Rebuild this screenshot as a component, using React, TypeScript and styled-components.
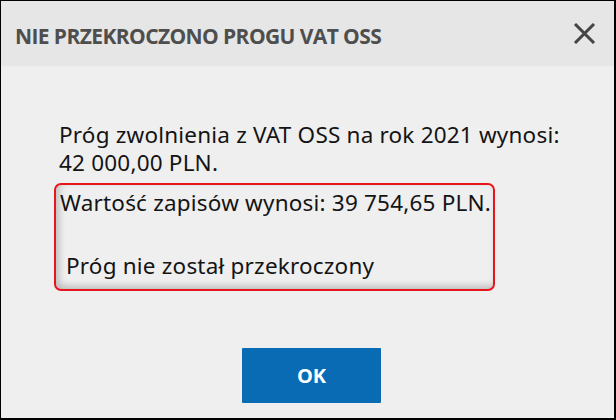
import styled, { createGlobalStyle } from "styled-components"

const GlobalStyle = createGlobalStyle`
  html, body {
    margin: 0;
    padding: 0;
    background: #ffffff;
  }
  * {
    box-sizing: border-box;
  }
`

const Dialog = styled.div`
  width: 616px;
  height: 420px;
  display: flex;
  flex-direction: column;
  background: #efefef;
  border-top: 1px solid #000;
  border-left: 1px solid #000;
  border-right: 2px solid #000;
  border-bottom: 2px solid #000;
  font-family: "Noto Sans", "Open Sans", sans-serif;
`

const Header = styled.header`
  height: 65px;
  flex-shrink: 0;
  display: flex;
  align-items: center;
  justify-content: space-between;
  padding: 4px 18px 0 14px;
  background: #e6e6e6;
`

const Title = styled.h1`
  margin: 0;
  font-family: "Open Sans", sans-serif;
  font-weight: 700;
  font-size: 21px;
  letter-spacing: -0.6px;
  color: #4e4e4e;
`

const CloseButton = styled.button`
  width: 23px;
  height: 21px;
  padding: 0;
  border: none;
  background: none;
  cursor: pointer;
  margin-top: -4px;

  svg {
    display: block;
  }
`

const Body = styled.div`
  display: flex;
  flex-direction: column;
  padding: 55px 0 0 58px;
  color: #141414;
  font-size: 22.5px;
  letter-spacing: 0.2px;
`

const Line = styled.div<{ $indent?: number }>`
  height: 28px;
  line-height: 28px;
  white-space: pre;
  padding-left: ${({ $indent }) => $indent ?? 0}px;
`

const Highlight = styled.div`
  width: 441px;
  height: 108px;
  margin: 6px 0 0 -5px;
  padding: 4px 0 0 4px;
  border: 2px solid #e8141b;
  border-radius: 7px;
  box-shadow: inset 3px -3px 7px rgba(0, 0, 0, 0.22);
  display: flex;
  flex-direction: column;
  gap: 35px;
`

const Footer = styled.div`
  display: flex;
  justify-content: center;
  padding: 57px 0 0 8px;
`

const OkButton = styled.button`
  width: 139px;
  height: 55px;
  border: none;
  border-radius: 1px;
  background: #0a6bb5;
  color: #ffffff;
  font-family: "Open Sans", sans-serif;
  font-weight: 700;
  font-size: 20px;
  cursor: pointer;
`

export default function App() {
  return (
    <>
      <GlobalStyle />
      <Dialog>
        <Header>
          <Title>NIE PRZEKROCZONO PROGU VAT OSS</Title>
          <CloseButton aria-label="Zamknij">
            <svg width="23" height="21" viewBox="0 0 23 21">
              <path d="M2 1 L21 20 M21 1 L2 20" stroke="#454545" strokeWidth="3" fill="none" />
            </svg>
          </CloseButton>
        </Header>

        <Body>
          <Line>Próg zwolnienia z VAT OSS na rok 2021 wynosi:</Line>
          <Line>42 000,00 PLN.</Line>

          <Highlight>
            <Line>Wartość zapisów wynosi: 39 754,65 PLN.</Line>
            <Line $indent={6}>Próg nie został przekroczony</Line>
          </Highlight>
        </Body>

        <Footer>
          <OkButton>OK</OkButton>
        </Footer>
      </Dialog>
    </>
  )
}
